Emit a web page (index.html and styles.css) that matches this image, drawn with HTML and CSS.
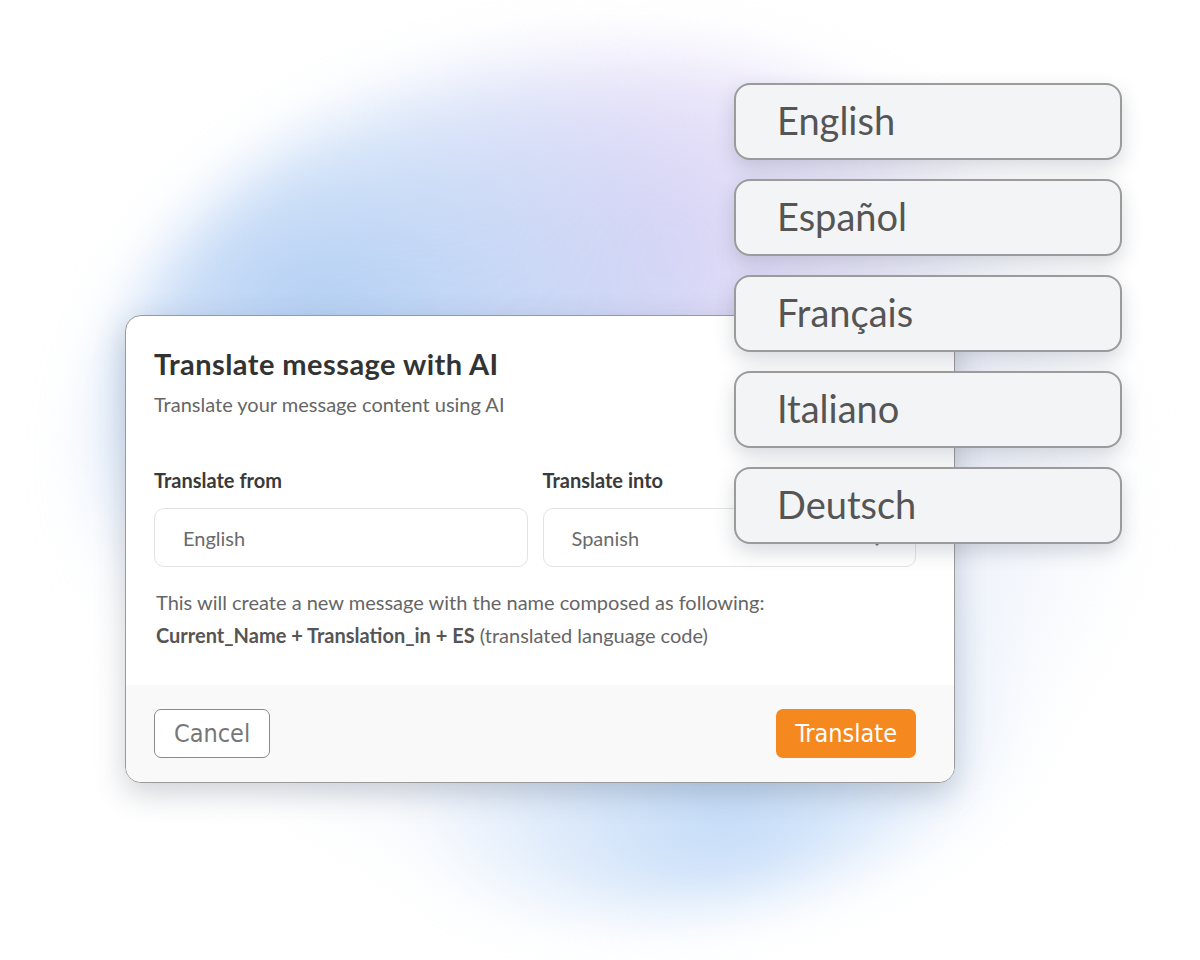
FILE: index.html
```html
<!DOCTYPE html>
<html lang="en">
<head>
    <meta charset="UTF-8">
    <meta name="viewport" content="width=device-width, initial-scale=1.0">
    <title>Translate message with AI</title>
    <link rel="stylesheet" href="styles.css">
</head>
<body>
 <div class="stage">
    <div class="glow"></div>

    <div class="dialog">
        <div class="dialog-body">
            <h1 class="dialog-title">Translate message with AI</h1>
            <p class="dialog-sub">Translate your message content using AI</p>

            <div class="fields">
                <div class="field">
                    <label class="field-label">Translate from</label>
                    <div class="select">English</div>
                </div>
                <div class="field">
                    <label class="field-label">Translate into</label>
                    <div class="select">Spanish
                        <svg class="chevron" width="12" height="12" viewBox="0 0 12 12"><path d="M2 4l4 4 4-4" fill="none" stroke="#777" stroke-width="1.5" stroke-linecap="round" stroke-linejoin="round"/></svg>
                    </div>
                </div>
            </div>

            <p class="note first">This will create a new message with the name composed as following:</p>
            <p class="note"><b>Current_Name + Translation_in + ES</b> (translated language code)</p>
        </div>

        <div class="dialog-foot">
            <button class="btn btn-cancel">Cancel</button>
            <button class="btn btn-primary">Translate</button>
        </div>
    </div>

    <ul class="langs">
        <li>English</li>
        <li>Español</li>
        <li>Français</li>
        <li>Italiano</li>
        <li>Deutsch</li>
    </ul>
 </div>
</body>
</html>
```

FILE: styles.css
```css
* {
    box-sizing: border-box;
}

body {
    margin: 0;
    background-color: #fff;
    font-family: Lato, "Open Sans", sans-serif;
}

.stage {
    position: relative;
    width: 1200px;
    height: 960px;
    overflow: hidden;
    padding: 315px 0 0 125px;
}

.glow {
    position: absolute;
    left: 90px;
    top: 50px;
    width: 1060px;
    height: 860px;
    border-radius: 50%;
    background:
        radial-gradient(ellipse at 22% 30%, #b3cff4 0, rgba(179, 207, 244, 0) 38%),
        radial-gradient(ellipse at 55% 22%, #ddd5f6 0, rgba(221, 213, 246, 0) 40%),
        radial-gradient(ellipse at 60% 88%, #c3dbf8 0, rgba(195, 219, 248, 0) 35%),
        radial-gradient(ellipse at 50% 50%, #dde6f7 0, rgba(235, 240, 250, 0.6) 55%, rgba(255, 255, 255, 0) 70%);
    filter: blur(30px);
}

.dialog {
    position: relative;
    width: 830px;
    height: 468px;
    background-color: #fff;
    border: 1.5px solid #9a9a9a;
    border-radius: 16px;
    box-shadow: 0 10px 30px rgba(60, 70, 90, .25);
    overflow: hidden;
    display: flex;
    flex-direction: column;
}

.dialog-body {
    flex-grow: 1;
    padding: 30px 38px 0 28px;
}

.dialog-title {
    margin: 0;
    font-size: 29px;
    line-height: 36px;
    font-weight: 700;
    color: #333;
    letter-spacing: .45px;
}

.dialog-sub {
    margin: 8px 0 0;
    font-size: 20px;
    line-height: 28px;
    color: #666;
}

.fields {
    display: flex;
    gap: 15px;
    margin-top: 50px;
}

.field {
    flex: 1;
}

.field-label {
    display: block;
    font-size: 20px;
    line-height: 24px;
    font-weight: 700;
    color: #3a3a3a;
}

.select {
    position: relative;
    margin-top: 16px;
    height: 59px;
    border: 1px solid #e3e3e3;
    border-radius: 10px;
    padding: 0 28px;
    display: flex;
    align-items: center;
    font-size: 20px;
    color: #6a6a6a;
}

.chevron {
    position: absolute;
    right: 32px;
    top: 28px;
}

.note {
    margin: 0;
    padding-left: 2px;
    font-size: 20px;
    line-height: 33px;
    color: #666;
}
.note.first {
    margin-top: 19px;
}
.note b {
    color: #555;
}

.dialog-foot {
    height: 97px;
    background-color: #f9f9f9;
    display: flex;
    align-items: center;
    justify-content: space-between;
    padding: 0 38px 0 28px;
}

.btn {
    height: 49px;
    border-radius: 7px;
    font-family: "DejaVu Sans Condensed", Roboto, sans-serif;
    font-size: 25px;
    padding: 0 19px;
}
.btn-cancel {
    background-color: #fff;
    border: 1.5px solid #8a8a8a;
    color: #777;
}
.btn-primary {
    background-color: #f5881f;
    border: none;
    color: #fff;
}

.langs {
    position: absolute;
    left: 734px;
    top: 83px;
    margin: 0;
    padding: 0;
    list-style: none;
    display: flex;
    flex-direction: column;
    gap: 19px;
}
.langs li {
    width: 388px;
    height: 77px;
    background-color: #f3f4f6;
    border: 2px solid #9b9b9b;
    border-radius: 16px;
    box-shadow: 0 8px 20px rgba(40, 50, 70, .18);
    padding: 0 0 4px 41px;
    display: flex;
    align-items: center;
    font-size: 38px;
    color: #555;
}
```
